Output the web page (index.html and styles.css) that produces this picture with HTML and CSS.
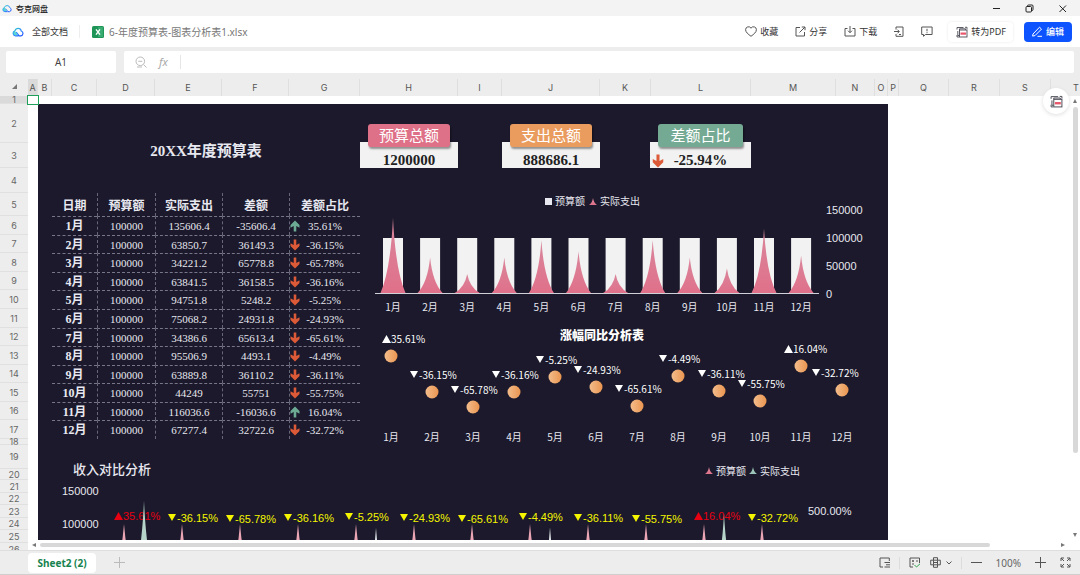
FILE: index.html
```html
<!DOCTYPE html>
<html lang="zh-CN">
<head>
    <meta charset="UTF-8">
    <meta name="viewport" content="width=device-width, initial-scale=1.0">
    <title>夸克网盘</title>
    <link rel="stylesheet" href="styles.css">
</head>
<body>
    <svg class="defs" width="0" height="0">
        <defs>
            <linearGradient id="cloud-fill" x1="0" y1="0" x2="1" y2="1">
                <stop offset="0" stop-color="#35d6c4"/>
                <stop offset="0.5" stop-color="#2e8bff"/>
                <stop offset="1" stop-color="#1f4fff"/>
            </linearGradient>
            <linearGradient id="spike-pink" x1="0" y1="0" x2="0" y2="1">
                <stop offset="0" stop-color="#d9879c"/>
                <stop offset="1" stop-color="#e0708a"/>
            </linearGradient>
            <linearGradient id="ball" x1="0" y1="0" x2="1" y2="0">
                <stop offset="0" stop-color="#f3bd8c"/>
                <stop offset="1" stop-color="#ea9550"/>
            </linearGradient>
            <symbol id="cloud" viewBox="0 0 12 10">
                <path d="M2.9 3.9A2.4 2.4 0 0 0 3.4 8.6L6 8.5 4.2 5.7z" fill="#58d8cf"/>
                <path d="M6.200 8.800H3.400a2.500 2.500 0 0 1-.500-4.900A3.300 3.300 0 0 1 9.300 4a2.500 2.500 0 0 1-.300 4.800H7.200L4.400 5.400" fill="none" stroke="url(#cloud-fill)" stroke-width="1.200" stroke-linecap="round" stroke-linejoin="round"/>
            </symbol>
            <symbol id="pdf" viewBox="0 0 12 12">
                <path d="M1 3.500V1.500H7.500M9 1.300h2v2M3.500 9.500H1.800V5M1 9v2h2M3.500 4V2.800h6V4" fill="none" stroke="#4a4a55" stroke-width="0.900"/>
                <rect x="3.500" y="4" width="7.500" height="7" fill="#fff" stroke="#4a4a55" stroke-width="0.900"/>
                <path d="M4.500 6.500h5.500v2.200H4.500z" fill="#e8566a" stroke="none"/>
            </symbol>
            <symbol id="arrow-down" viewBox="0 0 10 12">
                <path d="M3.700.500h2.600V6L9.500 4.200V7L5 11.500.500 7V4.200L3.700 6z" fill="#dc5a38"/>
            </symbol>
            <symbol id="arrow-up" viewBox="0 0 10 12">
                <path d="M3.700 11.500h2.600V6l3.200 1.800V5L5 .500.500 5v2.800L3.700 6z" fill="#6caa94"/>
            </symbol>
        </defs>
    </svg>

    <header class="titlebar">
        <svg class="logo-small" width="10" height="9"><use href="#cloud"/></svg>
        <span>夸克网盘</span>
        <div class="window-buttons">
            <button aria-label="最小化"><svg width="9" height="9" viewBox="0 0 9 9"><path d="M1 4.500h7"/></svg></button>
            <button aria-label="还原"><svg width="9" height="9" viewBox="0 0 9 9"><rect x="1" y="2.500" width="5.500" height="5.500" rx="1"/><path d="M2.500 2.500V2A1 1 0 0 1 3.500 1H7a1 1 0 0 1 1 1v3.500a1 1 0 0 1-1 1"/></svg></button>
            <button aria-label="关闭"><svg width="9" height="9" viewBox="0 0 9 9"><path d="M1.500 1.500l6.500 6.500M8 1.500L1.500 8"/></svg></button>
        </div>
    </header>

    <div class="toolbar">
        <a class="all-docs" href="#"><svg width="12" height="10"><use href="#cloud"/></svg>全部文档</a>
        <span class="file-name">
            <svg width="12" height="12" viewBox="0 0 12 12"><rect width="12" height="12" rx="1.500" fill="#1f9457"/><path d="M6 1h5v10H6z" fill="#37ab70"/><path d="M4 3.300l4 5.400M8 3.300L4 8.700" stroke="#fff" stroke-width="1.400"/></svg>
            6-年度预算表-图表分析表1.xlsx
        </span>
        <div class="actions">
            <button><svg width="12" height="11" viewBox="0 0 12 11"><path d="M6 10.300C3 8 .600 6.200.600 3.700A2.900 2.900 0 0 1 6 2.200a2.900 2.900 0 0 1 5.400 1.500C11.400 6.200 9 8 6 10.300z"/></svg>收藏</button>
            <button><svg width="11" height="11" viewBox="0 0 11 11"><path d="M5 1.500H1v8.500h8.500V6M4.500 6.500L10 1M6.800 1H10v3.200"/></svg>分享</button>
            <button><svg width="12" height="11" viewBox="0 0 12 11"><path d="M3.500 2.500H1V10h10V2.500H8.500M6 0v6.500M4 4.700l2 2 2-2"/></svg>下载</button>
            <button aria-label="发送到手机"><svg width="10" height="11" viewBox="0 0 10 11"><path d="M2 3.500V1h7v9.300H2V8M0 5.500h5M3.500 3.700l1.800 1.800-1.800 1.800M5 8.500h2"/></svg></button>
            <button aria-label="反馈"><svg width="12" height="11" viewBox="0 0 12 11"><path d="M.700 1h10.400v7.500H4.500L2.500 10.300V8.500H.700zM6 2.800v2.500M6 6.200v1"/></svg></button>
            <button class="pdf-button"><svg width="12" height="12"><use href="#pdf"/></svg>转为PDF</button>
            <button class="edit-button"><svg width="11" height="11" viewBox="0 0 11 11"><path d="M1 8L7.500 1.200l2 1.900L3 9.600l-2.400.500zM5.500 10.300H10"/></svg>编辑</button>
        </div>
    </div>

    <div class="formula-bar">
        <input class="cell-name" type="text" value="A1" aria-label="单元格">
        <div class="formula">
            <svg width="12" height="12" viewBox="0 0 12 12"><circle cx="5.300" cy="5.300" r="4.300"/><path d="M8.500 8.500l3 3M3.300 5.300h4M2 11h5"/></svg>
            <span class="fx">fx</span>
            <input type="text" aria-label="公式">
        </div>
    </div>

    <div class="column-heads">
        <div class="corner"></div>
        <div class="columns" id="columns"></div>
    </div>

    <main class="sheet">
        <div class="row-heads" id="rows"></div>
        <div class="grid-area">
            <section class="dashboard">
                <div class="left">
                    <h1>20XX年度预算表</h1>
                    <table>
                        <thead>
                            <tr><th>日期</th><th>预算额</th><th>实际支出</th><th>差额</th><th>差额占比</th></tr>
                        </thead>
                        <tbody id="budget"></tbody>
                    </table>
                </div>
                <div class="right">
                    <div class="cards">
                        <div class="card pink"><h2>预算总额</h2><p>1200000</p></div>
                        <div class="card orange"><h2>支出总额</h2><p>888686.1</p></div>
                        <div class="card green"><h2>差额占比</h2><p><svg width="12" height="14"><use href="#arrow-down"/></svg><span>-25.94%</span></p></div>
                    </div>
                    <svg class="chart" id="bar-chart" width="528" height="136" viewBox="360 184 528 136"></svg>
                    <svg class="chart" id="ball-chart" width="528" height="130" viewBox="360 320 528 130"></svg>
                </div>
                <svg class="chart income" id="income-chart" width="850" height="146" viewBox="38 450 850 146"></svg>
            </section>
            <div class="v-scroll"><i class="up"></i><b></b><i class="down"></i></div>
            <div class="h-scroll"><i class="prev"></i><b></b><i class="next"></i></div>
        </div>
        <div class="selected-cell"></div>
        <button class="float-pdf" aria-label="转为PDF"><svg width="13" height="13"><use href="#pdf"/></svg></button>
    </main>

    <footer class="statusbar">
        <button class="tab">Sheet2 (2)</button>
        <button class="add-tab" aria-label="新建工作表"><svg width="11" height="11" viewBox="0 0 11 11"><path d="M5.500 0v11M0 5.500h11"/></svg></button>
        <div class="tools">
            <button aria-label="目录"><svg width="11" height="11" viewBox="0 0 11 11"><path d="M4 10H1V1h9.300v3M5.500 5.500H11M7 7.800h4M5.500 10H11"/></svg></button>
            <span class="divider"></span>
            <button aria-label="校对"><svg width="12" height="11" viewBox="0 0 12 11"><path d="M4 10H1V1h9.500v5M3 4h2M4 3v2M7 4h2M3 7h2"/><path class="tick" d="M5.500 8l2 2L11 6.800"/></svg></button>
            <button class="view-mode" aria-label="视图"><svg width="11" height="11" viewBox="0 0 11 11"><path d="M3.500 3V.700h4V3M3.500 8v2.300h4V8M.700 3.200h9.600v4.600H.700zM3.500 3.200v4.600M7.500 3.200v4.600M3.500 5.500h4"/></svg><svg width="6" height="4" viewBox="0 0 6 4"><path d="M.500.500L3 3 5.500.500"/></svg></button>
            <span class="divider"></span>
            <button aria-label="缩小"><svg width="11" height="11" viewBox="0 0 11 11"><path d="M0 5.500h11"/></svg></button>
            <span class="zoom">100%</span>
            <button aria-label="放大"><svg width="11" height="11" viewBox="0 0 11 11"><path d="M5.500 0v11M0 5.500h11"/></svg></button>
            <button aria-label="全屏"><svg width="11" height="11" viewBox="0 0 11 11"><path d="M1 4V1h3M7 1h3v3M10 7v3H7M4 10H1V7M1 1l3 3M10 1L7 4M10 10L7 7M1 10l3-3"/></svg></button>
        </div>
    </footer>

    <script src="script.js"></script>
</body>
</html>
```
FILE: styles.css
```css
* {
    box-sizing: border-box;
}

body {
    margin: 0;
    height: 100vh;
    display: flex;
    flex-direction: column;
    overflow: hidden;
    background-color: #ededed;
    border-bottom: 1px solid #cfcfcf;
    color: #333;
    font-family: "Noto Sans", "Noto Sans CJK SC", sans-serif;
    font-size: 9px;
}

button {
    display: flex;
    align-items: center;
    padding: 0;
    border: none;
    background: none;
    color: inherit;
    font: inherit;
    white-space: nowrap;
    cursor: pointer;
}

button svg,
.formula svg {
    fill: none;
    stroke: #555;
    stroke-width: 1;
}

.defs {
    position: absolute;
}

/* window title */
.titlebar {
    display: flex;
    align-items: center;
    gap: 4px;
    height: 16px;
    padding: 0 13px 0 2px;
    background-color: #f3f3f3;
    color: #222;
    font-size: 8px;
    font-weight: 500;
}

.window-buttons {
    display: flex;
    gap: 24px;
    margin-left: auto;
}

.window-buttons svg {
    stroke: #222;
}

/* toolbar */
.toolbar {
    display: flex;
    align-items: center;
    height: 31px;
    padding: 0 8px 0 12px;
    background-color: #fff;
}

.all-docs {
    display: flex;
    align-items: center;
    gap: 8px;
    padding-right: 11px;
    border-right: 1px solid #eee;
    color: #333;
    text-decoration: none;
}

.file-name {
    display: flex;
    align-items: center;
    gap: 5px;
    margin-left: 12px;
    color: #777;
    font-size: 10px;
}

.actions {
    display: flex;
    align-items: center;
    gap: 17px;
    margin-left: auto;
}

.actions button {
    gap: 3px;
}

.actions .pdf-button {
    height: 20px;
    margin-left: -2px;
    padding: 0 7px 0 8px;
    border-radius: 4px;
    box-shadow: 0 0 3px #e8e8e8;
}

.actions .edit-button {
    height: 20px;
    margin-left: -6px;
    padding: 0 8px;
    border-radius: 4px;
    background-color: #0d53ff;
    color: #fff;
    font-weight: 500;
}

.edit-button svg {
    stroke: #fff;
}

/* formula bar */
.formula-bar {
    display: flex;
    gap: 8px;
    height: 32px;
    padding: 4px 6px 6px;
}

.formula-bar input {
    border: none;
    outline: none;
    background-color: #fff;
    color: #444;
    font: inherit;
    font-size: 10px;
}

.cell-name {
    width: 110px;
    border-radius: 2px;
    text-align: center;
}

.formula {
    display: flex;
    flex: 1;
    align-items: center;
    gap: 12px;
    padding-left: 11px;
    border-radius: 2px;
    background-color: #fff;
}

.formula svg {
    stroke: #bbb;
}

.fx {
    padding-right: 12px;
    border-right: 1px solid #e6e6e6;
    color: #aaa;
    font-size: 11px;
    font-style: italic;
    line-height: 14px;
}

.formula input {
    flex: 1;
    min-width: 0;
}

/* headings of the sheet */
.column-heads {
    display: flex;
    height: 17px;
    color: #555;
    font-family: Inter, sans-serif;
}

.corner {
    flex: none;
    width: 28px;
    padding: 5px 0 0 12px;
}

.corner::before {
    content: "";
    display: block;
    width: 5px;
    height: 5px;
    background-color: #777;
    clip-path: polygon(100% 0, 100% 100%, 0 100%);
}

.columns {
    display: flex;
    overflow: hidden;
}

.columns span {
    flex: none;
    border-right: 1px solid #dfdfdf;
    line-height: 17px;
    text-align: center;
}

.columns .active,
.row-heads .active {
    background-color: #dadada;
}

.sheet {
    position: relative;
    display: flex;
    flex: 1;
    min-height: 0;
}

.row-heads {
    flex: none;
    width: 28px;
    overflow: hidden;
    color: #666;
    font-family: Inter, sans-serif;
}

.row-heads span {
    display: flex;
    align-items: center;
    justify-content: center;
    border-bottom: 1px solid #e0e0e0;
}

.grid-area {
    position: relative;
    flex: 1;
    overflow: hidden;
    background-color: #fff;
}

.selected-cell {
    position: absolute;
    top: -1px;
    left: 27px;
    width: 12px;
    height: 10px;
    border: 1px solid #1fa05a;
}

/* dashboard */
.dashboard {
    display: grid;
    grid-template-columns: 322px 528px;
    width: 850px;
    margin: 8px 0 0 10px;
    background-color: #1b192b;
    color: #e8e8f0;
}

.left {
    padding-left: 14px;
    font-family: "Liberation Serif", "Noto Sans CJK SC", serif;
}

.left h1 {
    margin: 0;
    height: 89px;
    padding-top: 36px;
    font-size: 15px;
    line-height: 22px;
    text-align: center;
}

table {
    width: 308px;
    border-spacing: 0;
    table-layout: fixed;
    font-size: 11px;
    line-height: 14px;
    text-align: center;
}

th,
td {
    padding: 0;
    border-left: 1px dashed #686779;
}

thead th {
    height: 23px;
    padding-top: 3px;
    font-size: 12px;
}

thead th:nth-child(1) { width: 45px; }
thead th:nth-child(2) { width: 58px; }
thead th:nth-child(3) { width: 67px; }
thead th:nth-child(4) { width: 67px; }

th:first-child {
    border-left: none;
}

tbody th,
tbody td {
    border-top: 1px dashed #777688;
}

tbody th {
    font-size: 12px;
}

.ratio {
    display: flex;
    align-items: center;
    padding-right: 10px;
}

.ratio span {
    flex: 1;
}

.cards {
    display: grid;
    grid-template-columns: 98px 98px 101px;
    column-gap: 44px;
    height: 80px;
    padding-top: 20px;
}

.card h2 {
    position: relative;
    margin: 0 8px -5px;
    border-radius: 3px;
    box-shadow: 1px 2px 2px rgba(0, 0, 0, 0.4);
    color: #fff;
    font-size: 15px;
    font-weight: 400;
    line-height: 23px;
    text-align: center;
}

.card p {
    display: flex;
    align-items: center;
    justify-content: center;
    height: 26px;
    margin: 0;
    padding-top: 11px;
    background-color: #f2f2f2;
    color: #222;
    font-family: "Liberation Serif", serif;
    font-size: 15px;
    font-weight: 700;
    line-height: 15px;
}

.card.green {
    margin-left: 6px;
    margin-right: -6px;
}

.card.green p {
    padding-left: 2px;
    padding-right: 14px;
}

.card span {
    flex: 1;
    text-align: center;
}

.pink h2 { background-color: #de7087; }
.orange h2 { background-color: #e99c5e; }
.green h2 { background-color: #74a993; }

.chart {
    display: block;
    font-family: "Noto Sans CJK SC", sans-serif;
    font-size: 10px;
    fill: #e8e8f0;
}

.chart text {
    dominant-baseline: central;
}

.chart .axis {
    font-family: "Liberation Sans", sans-serif;
    font-size: 11px;
}

.chart .middle {
    text-anchor: middle;
}

.chart .heading {
    fill: #fff;
    font-size: 12px;
    font-weight: 900;
}

.chart .income-title {
    font-size: 13px;
    font-weight: 500;
}

.chart .label {
    fill: #fff;
}

.chart .up { fill: #e60012; }
.chart .down { fill: #f5f500; }

.income {
    grid-column: 1 / 3;
}

/* scroll bars */
.v-scroll,
.h-scroll {
    position: absolute;
    display: flex;
    align-items: center;
    background-color: #fff;
}

.v-scroll {
    top: 0;
    right: 0;
    bottom: 10px;
    flex-direction: column;
    width: 10px;
    padding: 3px 0;
}

.h-scroll {
    left: 0;
    right: 0;
    bottom: 0;
    height: 10px;
    padding: 0 15px 0 4px;
}

.v-scroll b {
    width: 5px;
    height: 79%;
    margin: 4px 0 auto;
    border-radius: 3px;
    background-color: #d8d8d8;
}

.h-scroll b {
    width: 92%;
    height: 4px;
    margin: 0 auto 0 4px;
    border-radius: 2px;
    background-color: #d8d8d8;
}

.v-scroll i,
.h-scroll i {
    width: 4px;
    height: 4px;
    background-color: #777;
}

.v-scroll .up { clip-path: polygon(50% 0, 100% 100%, 0 100%); }
.v-scroll .down { clip-path: polygon(0 0, 100% 0, 50% 100%); }
.h-scroll .prev { clip-path: polygon(100% 0, 100% 100%, 0 50%); }
.h-scroll .next { clip-path: polygon(0 0, 100% 50%, 0 100%); }

.float-pdf {
    position: absolute;
    top: -8px;
    right: 11px;
    justify-content: center;
    width: 26px;
    height: 26px;
    border-radius: 50%;
    background-color: #fff;
    box-shadow: 0 1px 4px #ddd;
}

/* sheet tabs and zoom */
.statusbar {
    display: flex;
    align-items: center;
    height: 24px;
    padding: 0 9px 0 28px;
    border-top: 1px solid #dedede;
    color: #666;
    font-size: 10px;
}

.tab {
    justify-content: center;
    width: 68px;
    height: 20px;
    border-radius: 4px;
    background-color: #fff;
    color: #16834f;
    font-weight: 700;
}

.add-tab {
    margin-left: 18px;
}

.add-tab svg {
    stroke: #bbb;
}

.tools {
    display: flex;
    align-items: center;
    gap: 14px;
    margin-left: auto;
}

.divider {
    width: 1px;
    height: 12px;
    margin: 0 -5px;
    background-color: #dcdcdc;
}

.view-mode {
    gap: 5px;
    margin-left: -5px;
}

.tools .tick {
    stroke: #2fa84f;
}
```
FILE: script.js
```js
const columns = {
    A: 10, B: 14, C: 45, D: 58, E: 67, F: 67, G: 71, H: 98, I: 44, J: 98,
    K: 51, L: 100, M: 85, N: 39, O: 13, P: 11, Q: 50, R: 51, S: 51, T: 51
};
const rows = [8, 39, 25, 25, 23, 19, 18, 19, 18, 19, 19, 18, 19, 18, 19, 18, 19,
    6, 24, 11, 13, 12, 13, 12, 13, 13];

// month by month: spent, difference, ratio
const data = [
    [135606.4, -35606.4, '35.61%'],
    [63850.7, 36149.3, '-36.15%'],
    [34221.2, 65778.8, '-65.78%'],
    [63841.5, 36158.5, '-36.16%'],
    [94751.8, 5248.2, '-5.25%'],
    [75068.2, 24931.8, '-24.93%'],
    [34386.6, 65613.4, '-65.61%'],
    [95506.9, 4493.1, '-4.49%'],
    [63889.8, 36110.2, '-36.11%'],
    [44249, 55751, '-55.75%'],
    [116036.6, -16036.6, '16.04%'],
    [67277.4, 32722.6, '-32.72%']
];

const isUp = (ratio) => !ratio.startsWith('-');

function spike(x, base, height, half, fill) {
    return `<path fill="${fill}" d="M${x - half} ${base}Q${x - half * 0.2} ${base - height * 0.3} ${x} ${base - height}` +
        `Q${x + half * 0.2} ${base - height * 0.3} ${x + half} ${base}z"/>`;
}

function triangle(x, y, up) {
    return up
        ? `<path d="M${x} ${y + 4}h9l-4.500-8z"/>`
        : `<path d="M${x} ${y - 4}h8l-4 7z"/>`;
}

function text(x, y, value, cls = '') {
    return `<text x="${x}" y="${y}" class="${cls}">${value}</text>`;
}

document.getElementById('columns').innerHTML = Object.entries(columns)
    .map(([name, width]) => `<span class="${name === 'A' ? 'active' : ''}" style="width:${width}px">${name}</span>`)
    .join('');

document.getElementById('rows').innerHTML = rows
    .map((height, i) => `<span class="${i === 0 ? 'active' : ''}" style="height:${height}px">${i + 1}</span>`)
    .join('');

document.getElementById('budget').innerHTML = data
    .map(([spent, diff, ratio], i) => `
        <tr style="height:${rows[i + 5]}px">
            <th>${i + 1}月</th><td>100000</td><td>${spent}</td><td>${diff}</td>
            <td><div class="ratio"><svg width="10" height="12"><use href="#arrow-${isUp(ratio) ? 'up' : 'down'}"/></svg><span>${ratio}</span></div></td>
        </tr>`)
    .join('');

// budget bars with the spending peaks over them
function drawBars() {
    const base = 293;
    let out = '<rect x="545" y="198" width="7" height="7"/>' + text(555, 200, '预算额') +
        spike(593, 205, 7, 4, 'url(#spike-pink)') + text(600, 200, '实际支出');
    data.forEach(([spent], i) => {
        const x = 393 + i * 37.1;
        out += `<rect x="${x - 10}" y="238" width="20" height="55" fill="#f2f2f2"/>`;
        out += spike(x, base, spent / 1800, 12.5, 'url(#spike-pink)');
        out += text(x, 306, `${i + 1}月`, 'middle');
    });
    out += `<path d="M375 ${base + 0.5}h444" stroke="#d0d0d8"/>`;
    [150000, 100000, 50000, 0].forEach((v, i) => out += text(826, 210 + i * 28, v, 'axis'));
    document.getElementById('bar-chart').innerHTML = out;
}

function drawBalls() {
    let out = text(602, 334, '涨幅同比分析表', 'heading middle');
    const levels = [356, 392, 407, 392, 377, 387, 406, 376, 391, 401, 366, 390];
    const starts = [382, 410, 451, 492, 536, 574, 615, 659, 698, 738, 784, 812];
    data.forEach(([, , ratio], i) => {
        const x = 391 + i * 41;
        const y = levels[i];
        out += `<circle cx="${x}" cy="${y}" r="6.500" fill="url(#ball)"/>`;
        out += `<g class="label">${triangle(starts[i], y - 17, isUp(ratio))}${text(starts[i] + 9, y - 18, ratio)}</g>`;
        out += text(x, 436, `${i + 1}月`, 'middle');
    });
    document.getElementById('ball-chart').innerHTML = out;
}

function drawIncome() {
    const base = 590;
    let out = text(73, 468, '收入对比分析', 'income-title') +
        spike(709, 474, 7, 4, 'url(#spike-pink)') + text(716, 470, '预算额') +
        spike(753, 474, 7, 4, '#9cc4b8') + text(760, 470, '实际支出') +
        text(62, 491, 150000, 'axis') + text(62, 524, 100000, 'axis') + text(808, 511, '500.00%', 'axis');
    const starts = [114, 168, 226, 284, 345, 400, 458, 519, 574, 632, 694, 748];
    const levels = [516, 518, 519, 518, 517, 518, 519, 517, 518, 519, 516, 518];
    data.forEach(([spent, , ratio], i) => {
        const x = 124 + i * 58;
        const up = isUp(ratio);
        out += `<g class="${up ? 'up' : 'down'}">${triangle(starts[i], levels[i], up)}${text(starts[i] + 9, levels[i], ratio, 'axis')}</g>`;
        out += spike(x, base, 66, 18, '#eba6b5');
        out += spike(x + 20, base, spent / 1520, 14, i % 10 === 0 ? '#b5d3c8' : '#dfe6ea');
    });
    document.getElementById('income-chart').innerHTML = out;
}

drawBars();
drawBalls();
drawIncome();
```
